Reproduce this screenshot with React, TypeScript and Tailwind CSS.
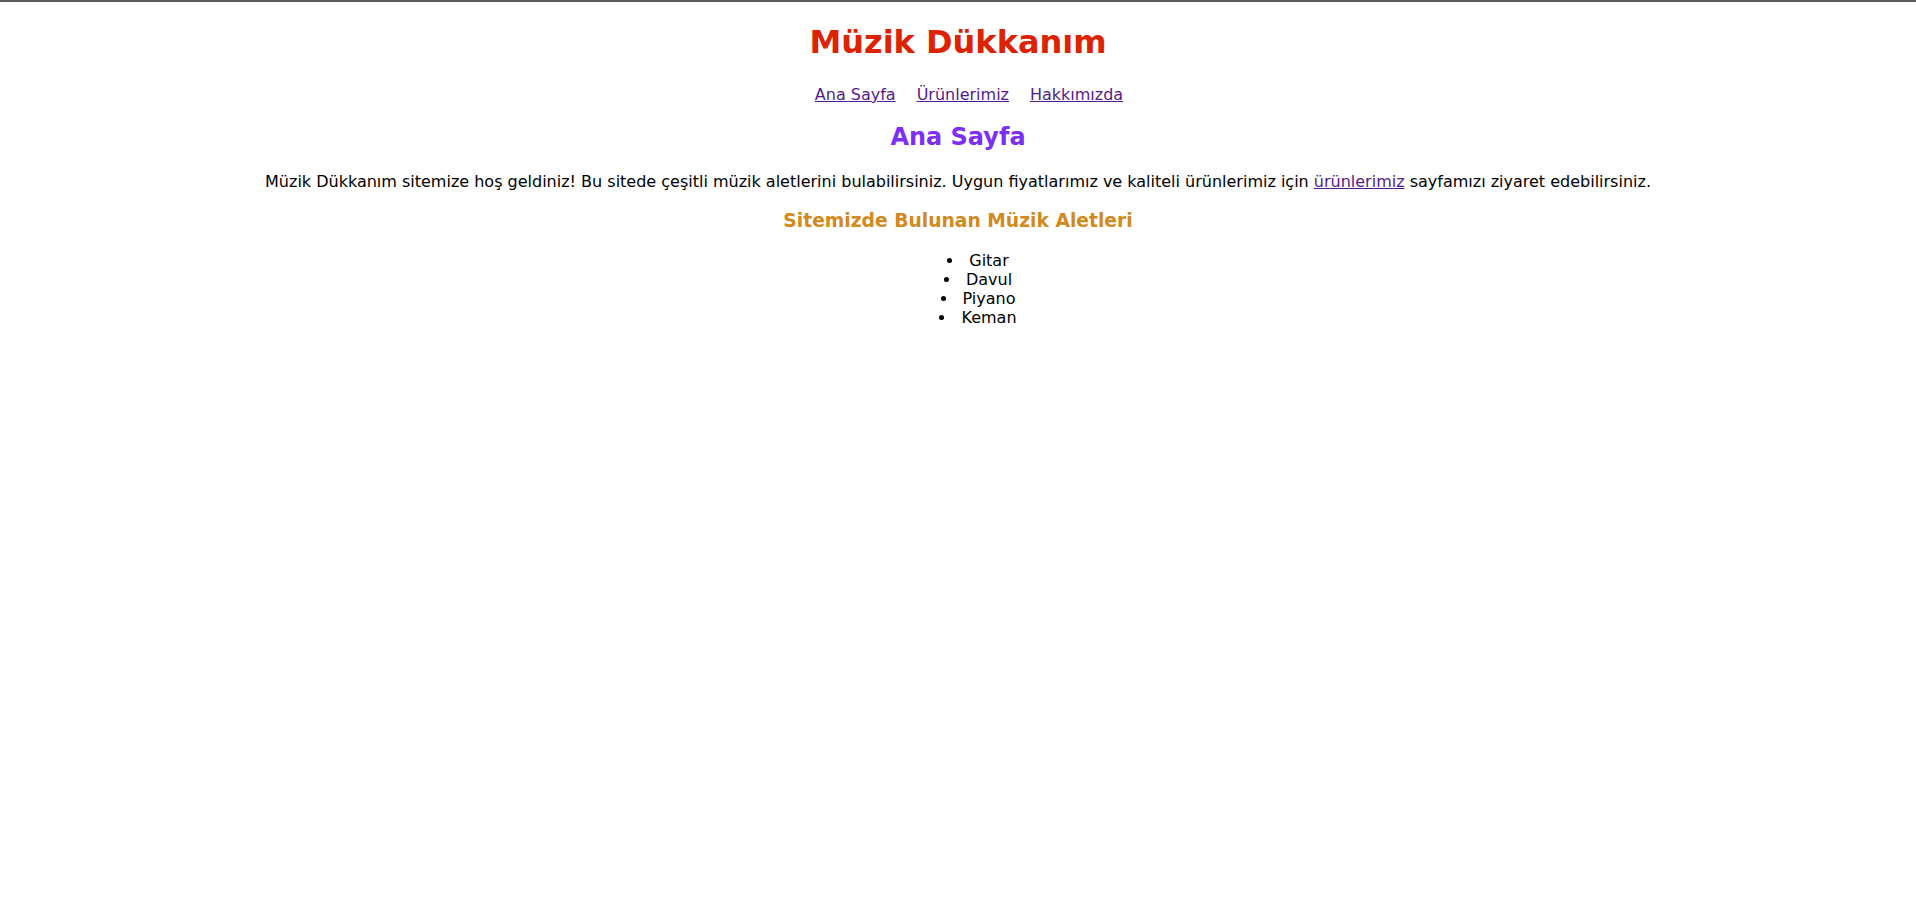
export default function App() {
  const items = ["Gitar", "Davul", "Piyano", "Keman"];

  return (
    <div className="min-h-screen border-t-2 border-[#5a5a5a] bg-white text-center text-black" style={{ fontFamily: '"DejaVu Sans", Verdana, sans-serif' }}>
      <h1 className="pt-[21px] text-[32px] font-bold leading-[38px] text-[#dd2200]">Müzik Dükkanım</h1>

      <nav className="mt-[24px] flex justify-center gap-[21px] pl-[22px] text-base leading-[19px]">
        <a href="#" className="text-[#551a8b] underline">Ana Sayfa</a>
        <a href="#" className="text-[#551a8b] underline">Ürünlerimiz</a>
        <a href="#" className="text-[#551a8b] underline">Hakkımızda</a>
      </nav>

      <h2 className="mt-[19px] text-[24px] font-bold leading-[28px] text-[#7b2ff7]">Ana Sayfa</h2>

      <p className="mt-[21px] text-base leading-[19px]">
        Müzik Dükkanım sitemize hoş geldiniz! Bu sitede çeşitli müzik aletlerini bulabilirsiniz. Uygun fiyatlarımız ve kaliteli ürünlerimiz için{" "}
        <a href="#" className="text-[#551a8b] underline">ürünlerimiz</a> sayfamızı ziyaret edebilirsiniz.
      </p>

      <h3 className="mt-[19px] text-[18.72px] font-bold leading-[22px] text-[#d08a20]">Sitemizde Bulunan Müzik Aletleri</h3>

      <ul className="mt-[19px] list-inside list-disc pl-10 text-base leading-[19px]">
        {items.map((it) => (
          <li key={it}>{it}</li>
        ))}
      </ul>
    </div>
  );
}
